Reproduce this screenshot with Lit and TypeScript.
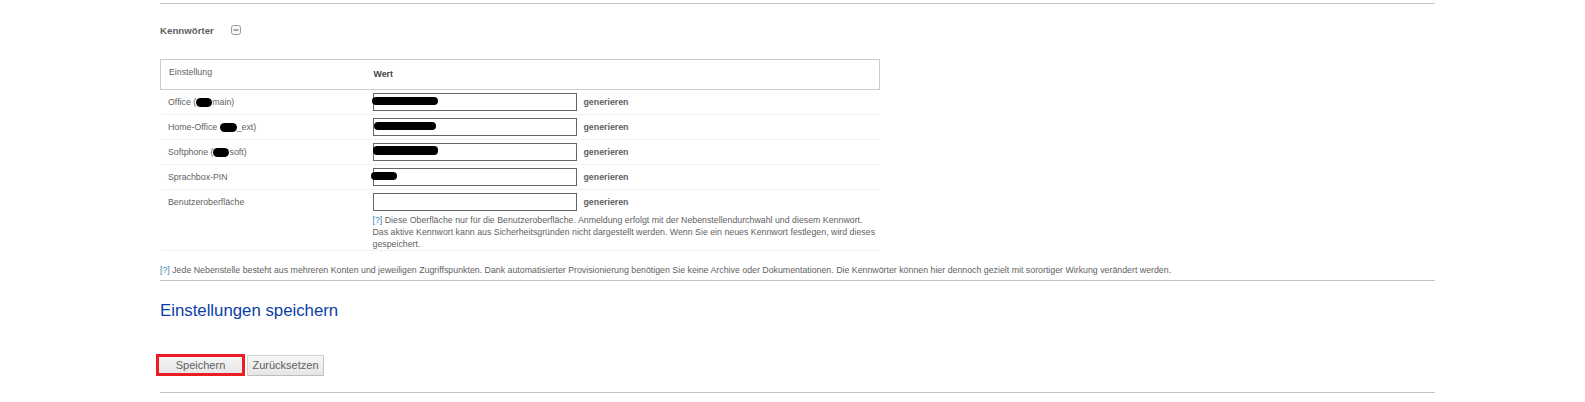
import { LitElement, html, css } from "lit";
import { customElement } from "lit/decorators.js";

interface Row { pre: string; post?: string; bw?: number; blob?: [number, number, number, number]; }
const rows: Row[] = [
  { pre: "Office (", post: "main)", bw: 16, blob: [-2, 3, 66, 8] },
  { pre: "Home-Office ", post: "_ext)", bw: 17, blob: [0, 3, 62, 8] },
  { pre: "Softphone (", post: "soft)", bw: 16, blob: [-1, 2, 65, 9] },
  { pre: "Sprachbox-PIN", blob: [-3, 3, 26, 8] },
  { pre: "Benutzeroberfläche" },
];

@customElement("app-root")
export class AppRoot extends LitElement {
  static styles = css`
    :host { display: block; font-family: "Liberation Sans", Arial, sans-serif; font-size: 8.8px; color: #5f5f5f; background: #fff; height: 402px; overflow: hidden; }
    .wrap { margin: 0 150px 0 160px; padding-top: 3px; }
    hr { border: 0; border-top: 1px solid #c4c4c4; margin: 0; }
    .title { display: flex; align-items: center; gap: 17px; height: 55px; padding-bottom: 3px; box-sizing: border-box; font-weight: bold; font-size: 9.7px; color: #5f5f5f; }
    .toggle { width: 10px; height: 10px; }
    table { width: 720px; border-collapse: collapse; table-layout: fixed; }
    th { height: 30px; padding: 0; border: 1px solid #ccc; text-align: left; font-size: 8.8px; box-sizing: border-box; }
    th.a { border-right: 0; padding-left: 8px; font-weight: normal; color: #5f5f5f; vertical-align: top; padding-top: 7px; }
    th.b { border-left: 0; padding: 0 0 1px 1px; font-weight: bold; color: #444; }
    td { padding: 0; border-bottom: 1px solid #f2f2f2; vertical-align: top; height: 24px; }
    td.l { padding: 7px 0 0 7.5px; box-sizing: border-box; }
    .lblob { display: inline-block; height: 9px; background: #000; border-radius: 5px; vertical-align: -2px; }
    .blob { position: absolute; background: #000; border-radius: 4px; }
    .field { display: flex; align-items: center; gap: 7px; padding-top: 3px; }
    .inp { position: relative; width: 204px; height: 18px; border: 1px solid #666; box-sizing: border-box; background: #fff; flex: none; }
    .gen { font-weight: bold; color: #5f5f5f; }
    .hint { line-height: 12px; margin: 3px 0 0; width: 504px; }
    .q { color: #3d7fae; }
    .foot { margin: 12px 0 0; line-height: 14px; height: 17px; }
    h2 { margin: 0; padding-top: 20px; height: 70px; box-sizing: border-box; font-weight: normal; font-size: 16.8px; line-height: 20px; color: #0a3ea8; }
    .btns { display: flex; align-items: center; gap: 2px; height: 28px; }
    .btn { height: 21px; box-sizing: border-box; border: 1px solid #d4d4d4; border-right-color: #c4c4c4; border-bottom-color: #bdbdbd; background: linear-gradient(#f6f6f6, #e6e6e6); font: 11px "Liberation Sans", Arial, sans-serif; color: #5f5f5f; padding: 0; text-align: center; }
    .save { width: 89px; height: 22px; margin-left: -4px; outline: 3px solid #ee1c25; outline-offset: -3px; }
    .reset { width: 77px; }
    .end { margin-top: 13px; }
  `;

  render() {
    return html`<div class="wrap">
      <hr />
      <div class="title">
        <span>Kennwörter</span>
        <svg class="toggle" viewBox="0 0 10 10"><rect x=".5" y=".5" width="9" height="9" rx="2" fill="#f6f6f6" stroke="#999"/><path d="M2.5 5h5" stroke="#555"/></svg>
      </div>
      <table>
        <colgroup><col style="width:212px" /><col /></colgroup>
        <tr><th class="a">Einstellung</th><th class="b">Wert</th></tr>
        ${rows.map((r, i) => html`<tr>
          <td class="l">${r.pre}${r.bw ? html`<span class="lblob" style="width:${r.bw}px"></span>${r.post}` : ""}</td>
          <td>
            <div class="field"><div class="inp">${r.blob ? html`<span class="blob" style="left:${r.blob[0]}px;top:${r.blob[1]}px;width:${r.blob[2]}px;height:${r.blob[3]}px"></span>` : ""}</div><span class="gen">generieren</span></div>
            ${i === 4 ? html`<div class="hint"><span class="q">[?]</span> Diese Oberfläche nur für die Benutzeroberfläche. Anmeldung erfolgt mit der Nebenstellendurchwahl und diesem Kennwort.<br />Das aktive Kennwort kann aus Sicherheitsgründen nicht dargestellt werden. Wenn Sie ein neues Kennwort festlegen, wird dieses gespeichert.</div>` : ""}
          </td>
        </tr>`)}
      </table>
      <div class="foot"><span class="q">[?]</span> Jede Nebenstelle besteht aus mehreren Konten und jeweiligen Zugriffspunkten. Dank automatisierter Provisionierung benötigen Sie keine Archive oder Dokumentationen. Die Kennwörter können hier dennoch gezielt mit sorortiger Wirkung verändert werden.</div>
      <hr />
      <h2>Einstellungen speichern</h2>
      <div class="btns"><button class="btn save">Speichern</button><button class="btn reset">Zurücksetzen</button></div>
      <hr class="end" />
    </div>`;
  }
}
